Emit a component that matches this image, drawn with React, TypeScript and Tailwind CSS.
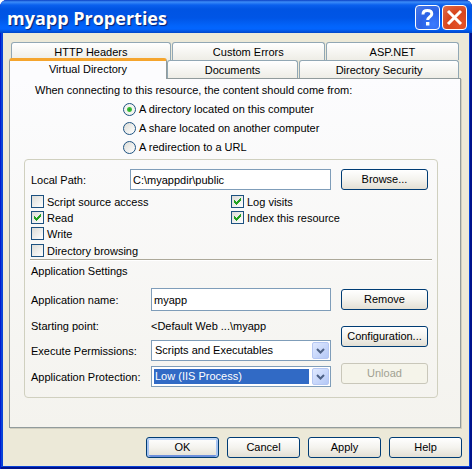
import React, { useState } from "react";

const buttonBase =
  "h-[21px] rounded-[3px] border text-center leading-[19px] whitespace-nowrap";
const buttonNormal =
  "border-[#003c74] bg-linear-to-b from-white via-[#f4f3ee] to-[#e3dfd4] text-black";

function Button({
  children,
  primary = false,
  disabled = false,
  className = "",
}: {
  children: React.ReactNode;
  primary?: boolean;
  disabled?: boolean;
  className?: string;
}) {
  const look = disabled
    ? "border-[#c9c7ba] bg-[#f5f4ea] text-[#a1a192]"
    : buttonNormal;
  const ring = primary
    ? "shadow-[inset_0_2px_0_#bcd4f6,inset_2px_0_0_#a6c3f1,inset_-2px_0_0_#a6c3f1,inset_0_-2px_0_#6d90dc]"
    : "";
  return (
    <button
      type="button"
      disabled={disabled}
      className={`${buttonBase} ${look} ${ring} ${className}`}
    >
      {children}
    </button>
  );
}

function Tab({
  children,
  className = "",
}: {
  children: React.ReactNode;
  className?: string;
}) {
  return (
    <button
      type="button"
      role="tab"
      aria-selected={false}
      className={`h-[18px] rounded-t-[3px] border border-b-0 border-[#91a7b4] bg-linear-to-b from-white to-[#eeede6] leading-[18px] whitespace-nowrap ${className}`}
    >
      {children}
    </button>
  );
}

function Radio({ label, checked = false }: { label: string; checked?: boolean }) {
  return (
    <label className="flex h-[14px] items-center gap-[3px]">
      <input
        type="radio"
        name="source"
        defaultChecked={checked}
        className="size-[13px] shrink-0 appearance-none rounded-full border border-[#1d5281] bg-linear-to-br from-[#dcdcd7] to-white checked:bg-[radial-gradient(circle,#21a121_0,#3fc03f_2px,#f3f3ef_3px)]"
      />
      {label}
    </label>
  );
}

function Check({
  label,
  checked = false,
  className = "",
}: {
  label: string;
  checked?: boolean;
  className?: string;
}) {
  return (
    <label className={`flex h-[13px] items-center gap-[3px] ${className}`}>
      <span className="grid size-[13px] shrink-0">
        <input
          type="checkbox"
          defaultChecked={checked}
          className="peer col-start-1 row-start-1 size-[13px] appearance-none border border-[#1c5180] bg-linear-to-br from-[#dcdcd7] to-white"
        />
        <svg
          viewBox="0 0 13 13"
          shapeRendering="crispEdges"
          className="pointer-events-none col-start-1 row-start-1 hidden size-[13px] fill-[#21a121] peer-checked:block"
        >
          <path d="M3 5h1v1h1v1h1v-1h1v-1h1v-1h1v-1h1v3h-1v1h-1v1h-1v1h-1v1h-1v-1h-1v-1h-1z" />
        </svg>
      </span>
      {label}
    </label>
  );
}

function Field({
  id,
  value,
  className,
}: {
  id: string;
  value: string;
  className: string;
}) {
  return (
    <input
      id={id}
      type="text"
      defaultValue={value}
      className={`min-w-0 flex-1 border border-[#7f9db9] bg-white px-[2px] outline-none ${className}`}
    />
  );
}

function Dropdown({
  id,
  options,
  highlighted = false,
}: {
  id: string;
  options: string[];
  highlighted?: boolean;
}) {
  return (
    <div className="flex h-[21px] min-w-0 flex-1 gap-[2px] border border-[#7f9db9] bg-white p-px">
      <select
        id={id}
        className={`m-px min-w-0 flex-1 appearance-none px-px leading-[15px] outline-none ${
          highlighted ? "bg-[#316ac5] text-white" : "bg-white text-black"
        }`}
      >
        {options.map((o) => (
          <option key={o}>{o}</option>
        ))}
      </select>
      <span
        aria-hidden="true"
        className="grid h-[17px] w-[17px] shrink-0 place-items-center rounded-[2px] border border-[#b5c7f3] bg-linear-to-br from-[#e0e9ff] to-[#b4c8f6]"
      >
        <svg width="9" height="6" viewBox="0 0 9 6" fill="none">
          <path d="M1 1l3.5 3.5L8 1" stroke="#4d6185" strokeWidth="2" />
        </svg>
      </span>
    </div>
  );
}

export default function App() {
  const [open, setOpen] = useState(true);
  if (!open) return null;
  return (
    <div className="bg-white font-['Liberation_Sans',Arial,sans-serif] text-[11px] leading-[14px] text-black">
      <main className="overflow-hidden rounded-t-[7px] bg-[#0842d8] px-[3px] pb-[3px] shadow-[inset_1px_0_0_#0019cf,inset_-2px_0_0_#00138c,inset_0_-2px_0_#00138c]">
        <header className="-mx-[3px] flex h-[33px] items-center justify-between bg-[linear-gradient(to_bottom,#0a3fc4_0,#3c8cf8_2px,#0a60ee_5px,#0054e3_9px,#0055e6_18px,#0264fb_26px,#0265ff_29px,#0046c8_33px)] pr-[5px] pl-[7px]">
          <h1 className="pt-[2px] font-['Open_Sans','Noto_Sans',sans-serif] text-[18px] leading-[24px] font-bold text-white [text-shadow:1px_1px_1px_#0a1f6e]">
            myapp Properties
          </h1>
          <div className="flex gap-[2px] pt-[2px]">
            <button
              type="button"
              aria-label="Help for this window"
              className="size-[25px] rounded-[4px] border border-white bg-[radial-gradient(circle_at_75%_80%,#3a7bff_0,#2b62e6_50%,#4a7ae6_100%)]"
            >
              <svg viewBox="0 0 23 23" className="size-[23px]" fill="none">
                <path
                  d="M7 8.500C7 5.600 8.800 4.600 11.400 4.600c2.600 0 4.400 1.200 4.400 3.400 0 2.800-4.100 3-4.100 6"
                  stroke="white"
                  strokeWidth="3"
                />
                <path d="M10 16h3.400v3.400H10z" fill="white" />
              </svg>
            </button>
            <button
              type="button"
              aria-label="Close"
              onClick={() => setOpen(false)}
              className="size-[25px] rounded-[4px] border border-white bg-[radial-gradient(circle_at_75%_80%,#e4542a_0,#d8451d_50%,#e0704e_100%)]"
            >
              <svg viewBox="0 0 23 23" className="size-[23px]" fill="none">
                <path d="M5 5l13 13M18 5l-13 13" stroke="white" strokeWidth="3" />
              </svg>
            </button>
          </div>
        </header>

        <div className="bg-[#ece9d8] pt-[9px] pr-[7px] pb-[8px] pl-[6px]">
          <div role="tablist" className="pr-px">
            <div className="flex gap-px px-[2px]">
              <Tab className="flex-[160]">HTTP Headers</Tab>
              <Tab className="flex-[153]">Custom Errors</Tab>
              <Tab className="flex-[133]">ASP.NET</Tab>
            </div>
            <div className="-mt-[2px] flex items-end pr-[2px]">
              <button
                type="button"
                role="tab"
                aria-selected={true}
                className="relative -mb-px h-[21px] flex-[158] rounded-t-[3px] border-x border-t-[3px] border-x-[#919b9c] border-t-[#f5a52d] bg-[#fcfcfe] pb-[2px] leading-[14px]"
              >
                Virtual Directory
              </button>
              <Tab className="flex-[131]">Documents</Tab>
              <Tab className="ml-px flex-[160]">Directory Security</Tab>
            </div>
          </div>

          <section
            role="tabpanel"
            className="mr-px border border-[#919b9c] bg-linear-to-b from-[#fcfcfe] to-[#f4f3ee] pt-[4px] pr-[22px] pb-[29px] pl-[14px] shadow-[1px_1px_0_#d0cebf]"
          >
            <fieldset>
              <legend className="pl-[11px]">
                When connecting to this resource, the content should come from:
              </legend>
              <div className="flex flex-col gap-[5px] pt-[5px] pl-[99px]">
                <Radio label="A directory located on this computer" checked />
                <Radio label="A share located on another computer" />
                <Radio label="A redirection to a URL" />
              </div>
            </fieldset>

            <div className="mt-[5px] rounded-[4px] border border-[#d0d0bf] pt-[9px] pr-[9px] pb-[10px] pl-[6px]">
              <div className="flex items-center">
                <label htmlFor="path" className="w-[99px]">
                  Local Path:
                </label>
                <Field id="path" value="C:\myappdir\public" className="h-[21px]" />
                <Button className="ml-[10px] w-[87px]">Browse...</Button>
              </div>

              <div className="flex pt-[5px]">
                <div className="flex w-[200px] flex-col gap-[3px]">
                  <Check label="Script source access" />
                  <Check label="Read" checked />
                  <Check label="Write" />
                  <Check label="Directory browsing" className="mt-px" />
                </div>
                <div className="flex flex-col gap-[3px]">
                  <Check label="Log visits" checked />
                  <Check label="Index this resource" checked />
                </div>
              </div>

              <hr className="mt-[2px] -mr-[4px] -ml-px border-t border-[#aca899] shadow-[0_1px_0_white]" />
              <h2 className="pt-[4px]">Application Settings</h2>

              <div className="flex gap-[10px] pt-[10px]">
                <div className="flex min-w-0 flex-1 flex-col">
                  <div className="flex items-center">
                    <label htmlFor="name" className="w-[120px]">
                      Application name:
                    </label>
                    <Field id="name" value="myapp" className="h-[23px]" />
                  </div>
                  <div className="flex h-[29px] items-center">
                    <span className="w-[120px]">Starting point:</span>
                    <span>&lt;Default Web ...\myapp</span>
                  </div>
                  <div className="flex items-center">
                    <label htmlFor="execute" className="w-[120px]">
                      Execute Permissions:
                    </label>
                    <Dropdown
                      id="execute"
                      options={["Scripts and Executables", "Scripts only", "None"]}
                    />
                  </div>
                  <div className="flex items-center pt-[5px]">
                    <label htmlFor="protection" className="w-[120px]">
                      Application Protection:
                    </label>
                    <Dropdown
                      id="protection"
                      options={["Low (IIS Process)", "Medium (Pooled)", "High (Isolated)"]}
                      highlighted
                    />
                  </div>
                </div>
                <div className="flex w-[87px] flex-col gap-[16px] pt-px">
                  <Button>Remove</Button>
                  <Button>Configuration...</Button>
                  <Button disabled>Unload</Button>
                </div>
              </div>
            </div>
          </section>

          <footer className="flex justify-end gap-[8px] pt-[9px]">
            <Button primary className="w-[73px]">OK</Button>
            <Button className="w-[73px]">Cancel</Button>
            <Button className="w-[73px]">Apply</Button>
            <Button className="w-[73px]">Help</Button>
          </footer>
        </div>
      </main>
    </div>
  );
}
